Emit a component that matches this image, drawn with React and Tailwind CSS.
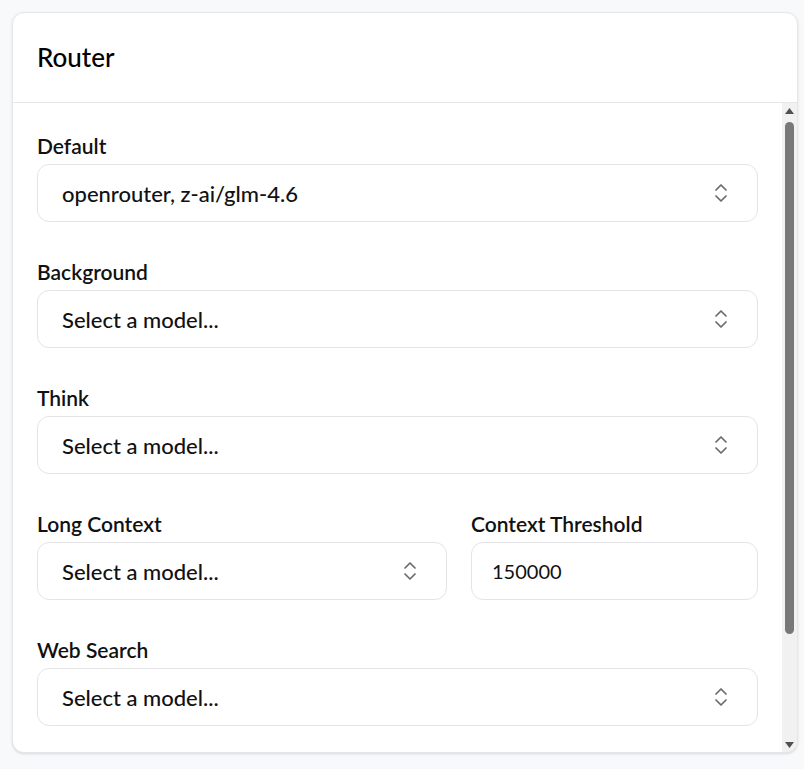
import React from 'react';
import { ChevronsUpDown } from 'lucide-react';

const FIELDS = [
    { key: 'default', label: 'Default', value: 'openrouter, z-ai/glm-4.6' },
    { key: 'background', label: 'Background' },
    { key: 'think', label: 'Think' },
    { key: 'longContext', label: 'Long Context', threshold: '150000' },
    { key: 'webSearch', label: 'Web Search' },
];

const ModelSelect = ({ value }) => (
    <button className="flex h-[58px] w-full items-center justify-between rounded-[12px] border border-[#e4e4e7] bg-white pl-6 pr-6 text-left">
        <span className="text-[22px] font-medium text-[#111]">{value || 'Select a model...'}</span>
        <ChevronsUpDown size={24} strokeWidth={1.75} className="text-[#6b6b6b]" />
    </button>
);

const Label = ({ children }) => (
    <label className="mb-[4px] block h-[28px] text-[21px] font-semibold leading-[28px] text-[#111]">{children}</label>
);

// classic scrollbar, drawn (thumb at top)
const Scrollbar = () => (
    <div className="flex w-[15px] shrink-0 flex-col bg-[#f1f1f1]">
        <div className="flex h-[15px] items-center justify-center">
            <svg width="9" height="6" viewBox="0 0 9 6"><path d="M4.5 0 L9 6 L0 6 Z" fill="#505050" /></svg>
        </div>
        <div className="flex-1 px-[3px] pt-[4px] pb-[100px]">
            <div className="h-[512px] rounded-full bg-[#787878]" />
        </div>
        <div className="flex h-[15px] items-center justify-center">
            <svg width="9" height="6" viewBox="0 0 9 6"><path d="M0 0 L9 0 L4.5 6 Z" fill="#505050" /></svg>
        </div>
    </div>
);

export default function App() {
    return (
        <div className="min-h-screen bg-[#f8f9fa] p-3" style={{ fontFamily: 'Lato, "Noto Sans", sans-serif' }}>
            <div className="flex h-[741px] w-[786px] flex-col overflow-hidden rounded-[12px] border border-[#e5e7eb] bg-white shadow-sm">
                {/* Header */}
                <div className="flex h-[90px] shrink-0 items-center border-b border-[#e5e7eb] px-6">
                    <h3 className="text-[26px] font-medium text-black">Router</h3>
                </div>

                {/* Fields */}
                <div className="flex min-h-0 flex-1">
                    <div className="min-w-0 flex-1 overflow-hidden px-6 pt-[29px] pb-8">
                        <div className="flex flex-col gap-[36px]">
                            {FIELDS.map(f => f.threshold ? (
                                <div key={f.key} className="flex gap-6">
                                    <div className="flex-1">
                                        <Label>{f.label}</Label>
                                        <ModelSelect value={f.value} />
                                    </div>
                                    <div className="w-[287px]">
                                        <Label>Context Threshold</Label>
                                        <input
                                            defaultValue={f.threshold}
                                            className="h-[58px] w-full rounded-[12px] border border-[#e4e4e7] px-5 text-[20px] text-[#111] outline-none"
                                        />
                                    </div>
                                </div>
                            ) : (
                                <div key={f.key}>
                                    <Label>{f.label}</Label>
                                    <ModelSelect value={f.value} />
                                </div>
                            ))}
                        </div>
                    </div>
                    <Scrollbar />
                </div>
            </div>
        </div>
    );
}
